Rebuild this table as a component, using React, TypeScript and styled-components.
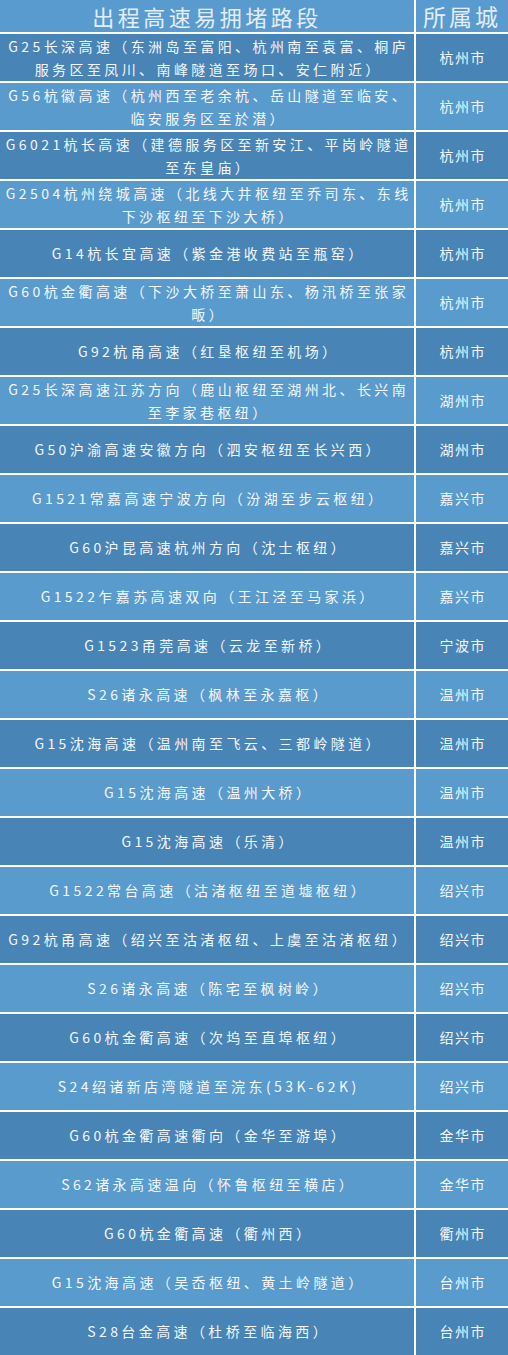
import React from "react";
import styled, { createGlobalStyle } from "styled-components";

const GlobalStyle = createGlobalStyle`
  html, body { margin: 0; padding: 0; background: #ffffff; }
  body { font-family: "Noto Sans CJK SC", "Noto Sans", sans-serif; }
`;

type Row = { road: string; city: string };

const rows: Row[] = [
  { road: "G25长深高速（东洲岛至富阳、杭州南至袁富、桐庐服务区至凤川、南峰隧道至场口、安仁附近）", city: "杭州市" },
  { road: "G56杭徽高速（杭州西至老余杭、岳山隧道至临安、临安服务区至於潜）", city: "杭州市" },
  { road: "G6021杭长高速（建德服务区至新安江、平岗岭隧道至东皇庙）", city: "杭州市" },
  { road: "G2504杭州绕城高速（北线大井枢纽至乔司东、东线下沙枢纽至下沙大桥）", city: "杭州市" },
  { road: "G14杭长宜高速（紫金港收费站至瓶窑）", city: "杭州市" },
  { road: "G60杭金衢高速（下沙大桥至萧山东、杨汛桥至张家畈）", city: "杭州市" },
  { road: "G92杭甬高速（红垦枢纽至机场）", city: "杭州市" },
  { road: "G25长深高速江苏方向（鹿山枢纽至湖州北、长兴南至李家巷枢纽）", city: "湖州市" },
  { road: "G50沪渝高速安徽方向（泗安枢纽至长兴西）", city: "湖州市" },
  { road: "G1521常嘉高速宁波方向（汾湖至步云枢纽）", city: "嘉兴市" },
  { road: "G60沪昆高速杭州方向（沈士枢纽）", city: "嘉兴市" },
  { road: "G1522乍嘉苏高速双向（王江泾至马家浜）", city: "嘉兴市" },
  { road: "G1523甬莞高速（云龙至新桥）", city: "宁波市" },
  { road: "S26诸永高速（枫林至永嘉枢）", city: "温州市" },
  { road: "G15沈海高速（温州南至飞云、三都岭隧道）", city: "温州市" },
  { road: "G15沈海高速（温州大桥）", city: "温州市" },
  { road: "G15沈海高速（乐清）", city: "温州市" },
  { road: "G1522常台高速（沽渚枢纽至道墟枢纽）", city: "绍兴市" },
  { road: "G92杭甬高速（绍兴至沽渚枢纽、上虞至沽渚枢纽）", city: "绍兴市" },
  { road: "S26诸永高速（陈宅至枫树岭）", city: "绍兴市" },
  { road: "G60杭金衢高速（次坞至直埠枢纽）", city: "绍兴市" },
  { road: "S24绍诸新店湾隧道至浣东(53K-62K)", city: "绍兴市" },
  { road: "G60杭金衢高速衢向（金华至游埠）", city: "金华市" },
  { road: "S62诸永高速温向（怀鲁枢纽至横店）", city: "金华市" },
  { road: "G60杭金衢高速（衢州西）", city: "衢州市" },
  { road: "G15沈海高速（吴岙枢纽、黄土岭隧道）", city: "台州市" },
  { road: "S28台金高速（杜桥至临海西）", city: "台州市" },
];

const Table = styled.div`
  display: grid;
  grid-template-columns: 414px 92px;
  grid-template-rows: 32px;
  grid-auto-rows: 47px;
  column-gap: 2px;
  row-gap: 2px;
  width: 508px;
  background: #ffffff;
  overflow: hidden;
`;

const HeadCell = styled.div<{ $spacing: number; $size: number }>`
  display: flex;
  align-items: center;
  justify-content: center;
  background: #5a9bcf;
  color: #e2edf7;
  font-size: ${(p) => p.$size}px;
  letter-spacing: ${(p) => p.$spacing}px;
  line-height: 1;
  white-space: nowrap;
`;

const Cell = styled.div<{ $dark: boolean; $spacing: number }>`
  display: flex;
  align-items: center;
  justify-content: center;
  text-align: center;
  background: ${(p) => (p.$dark ? "#4884b6" : "#5a9bcd")};
  color: #f3f7fb;
  font-size: 14px;
  line-height: 23px;
  letter-spacing: ${(p) => p.$spacing}px;
  padding: 0 0 0 ${(p) => p.$spacing}px;
  box-sizing: border-box;
`;

export default function App() {
  return (
    <>
      <GlobalStyle />
      <Table>
        <HeadCell $size={22} $spacing={3.5}>出程高速易拥堵路段</HeadCell>
        <HeadCell $size={23} $spacing={3}>所属城</HeadCell>
        {rows.map((r, i) => (
          <React.Fragment key={i}>
            <Cell $dark={i % 2 === 0} $spacing={3.4}>{r.road}</Cell>
            <Cell $dark={i % 2 === 0} $spacing={1.5}>{r.city}</Cell>
          </React.Fragment>
        ))}
      </Table>
    </>
  );
}
